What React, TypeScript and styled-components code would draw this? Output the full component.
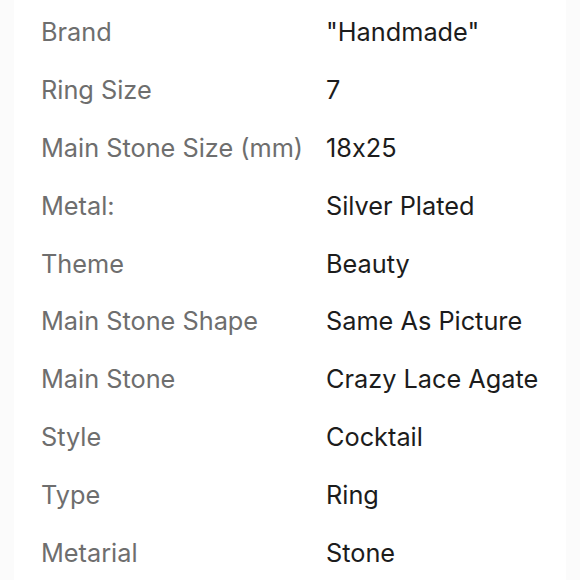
import React from "react";
import styled, { createGlobalStyle } from "styled-components";

const Global = createGlobalStyle`
  html, body { margin: 0; padding: 0; background: #ffffff; }
  body { font-family: Inter, "Noto Sans", sans-serif; }
`;

const Page = styled.div`
  width: 580px;
  height: 580px;
  display: flex;
  background: #ffffff;
  overflow: hidden;
`;

const Edge = styled.div`
  width: 14px;
  flex: none;
  background: #fbfbfb;
`;

const Table = styled.div`
  flex: 1;
  display: grid;
  grid-template-columns: 285px 1fr;
  grid-auto-rows: 57.8px;
  align-items: center;
  padding: 3px 0 0 27px;
  font-size: 25.3px;
  letter-spacing: 0;
  font-feature-settings: "calt" 0;
`;

const Label = styled.div`
  color: #6e6e6e;
`;

const Value = styled.div`
  color: #1c1c1c;
`;

const rows: [string, string][] = [
  ["Brand", '"Handmade"'],
  ["Ring Size", "7"],
  ["Main Stone Size (mm)", "18x25"],
  ["Metal:", "Silver Plated"],
  ["Theme", "Beauty"],
  ["Main Stone Shape", "Same As Picture"],
  ["Main Stone", "Crazy Lace Agate"],
  ["Style", "Cocktail"],
  ["Type", "Ring"],
  ["Metarial", "Stone"],
];

export default function App() {
  return (
    <>
      <Global />
      <Page>
        <Edge />
        <Table>
          {rows.map(([k, v]) => (
            <React.Fragment key={k}>
              <Label>{k}</Label>
              <Value>{v}</Value>
            </React.Fragment>
          ))}
        </Table>
        <Edge />
      </Page>
    </>
  );
}
